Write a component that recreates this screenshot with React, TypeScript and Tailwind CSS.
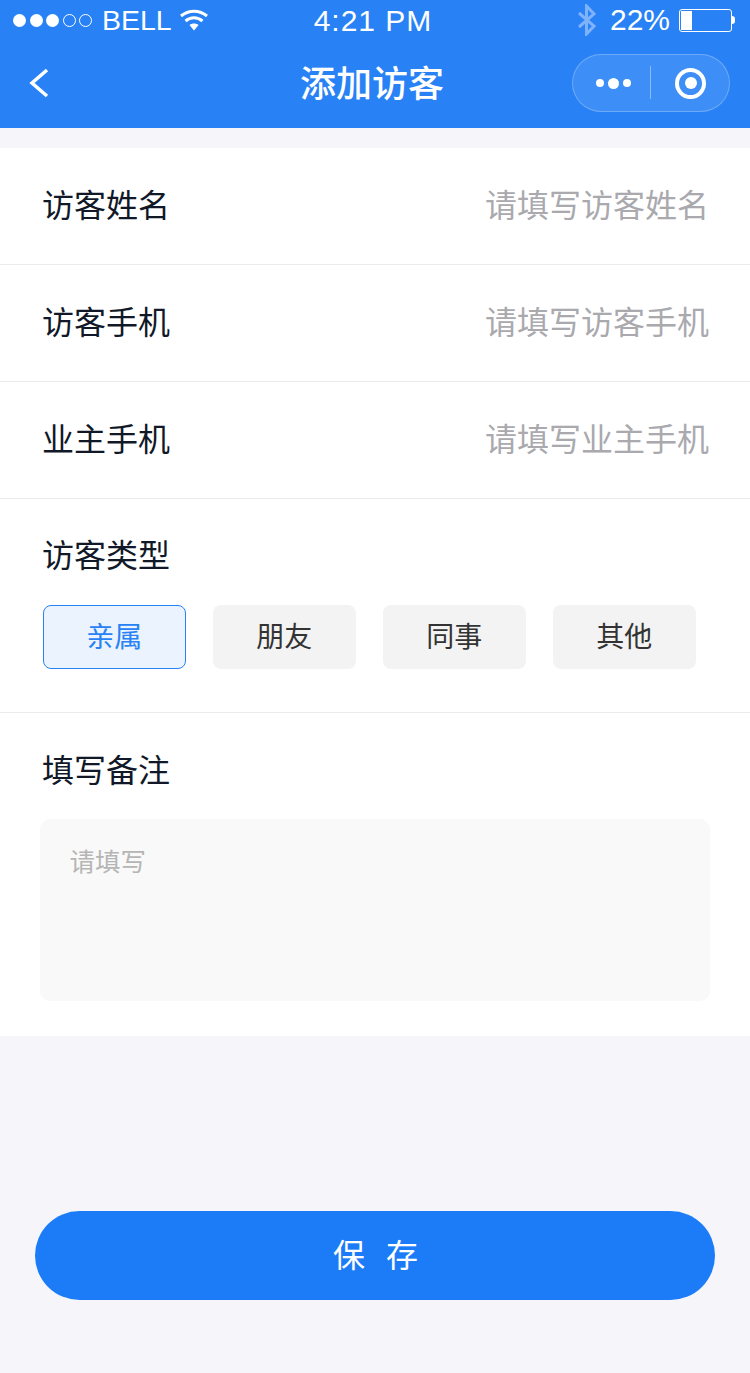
const cjk = "font-['Liberation_Sans','Noto_Sans_CJK_SC',sans-serif]";

const rows = [
  { label: '访客姓名', hint: '请填写访客姓名' },
  { label: '访客手机', hint: '请填写访客手机' },
  { label: '业主手机', hint: '请填写业主手机' },
];

const types = ['亲属', '朋友', '同事', '其他'];

function StatusBar() {
  return (
    <div className="grid h-[40px] grid-cols-3 items-center text-white">
      <div className="flex items-center pl-[13px]">
        <div className="flex items-center gap-[3.5px]">
          <span className="h-[13px] w-[13px] rounded-full bg-white" />
          <span className="h-[13px] w-[13px] rounded-full bg-white" />
          <span className="h-[13px] w-[13px] rounded-full bg-white" />
          <span className="h-[13px] w-[13px] rounded-full border border-white" />
          <span className="h-[13px] w-[13px] rounded-full border border-white" />
        </div>
        <span className="ml-[10px] text-[28.500px] leading-none">BELL</span>
        <svg className="ml-[8px] mt-[-1px]" width="28" height="23" viewBox="0 0 28 23" fill="none">
          <path d="M1 8C8.500 1.500 19.500 1.500 27 8" stroke="white" strokeWidth="3" />
          <path d="M5.500 13C10.500 8.800 17.500 8.800 22.500 13" stroke="white" strokeWidth="3" />
          <path d="M9.500 17C12 15 16 15 18.500 17L14 22.500Z" fill="white" />
        </svg>
      </div>
      <div className="pr-[4px] pt-[2px] text-center text-[30px] leading-none tracking-[1px] whitespace-nowrap">4:21 PM</div>
      <div className="flex items-center justify-end pr-[15px]">
        <svg className="mr-[13px]" width="20" height="32" viewBox="0 0 20 32" fill="none" stroke="#7fb2f9" strokeWidth="3">
          <path d="M2 9L17 22L9.500 30V2L17 10L2 23" />
        </svg>
        <span className="text-[30px] leading-none">22%</span>
        <div className="ml-[9px] flex items-center">
          <div className="h-[23px] w-[53px] rounded-[3px] border border-white p-[1px]">
            <div className="h-full w-[11px] bg-white" />
          </div>
          <div className="h-[8px] w-[3px] rounded-r-[3px] bg-white" />
        </div>
      </div>
    </div>
  );
}

function NavBar() {
  return (
    <div className="relative flex h-[88px] items-center justify-between pb-[3px] pl-[27px] pr-[20px]">
      <svg width="24" height="32" viewBox="0 0 24 32" fill="none" stroke="white" strokeWidth="3.500">
        <path d="M20 3L5 16L20 29" />
      </svg>
      <div className="absolute inset-x-0 top-[20px] pr-[6px] text-center text-[36px] font-medium leading-[50px] text-white">添加访客</div>
      <div className="flex h-[58px] w-[158px] items-center rounded-full border border-white/25 bg-white/10">
        <div className="flex w-[77px] items-center justify-end gap-[4px] pr-[19px] pt-[1px]">
          <span className="h-[8px] w-[8px] rounded-full bg-white" />
          <span className="h-[11px] w-[11px] rounded-full bg-white" />
          <span className="h-[8px] w-[8px] rounded-full bg-white" />
        </div>
        <div className="h-[33px] w-px bg-white/40" />
        <div className="flex flex-1 justify-center pl-[1px] pt-[1px]">
          <div className="flex h-[31px] w-[31px] items-center justify-center rounded-full border-[4px] border-white">
            <span className="h-[12px] w-[12px] rounded-full bg-white" />
          </div>
        </div>
      </div>
    </div>
  );
}

export default function App() {
  return (
    <div className={`flex h-[1373px] w-[750px] flex-col bg-[#f5f5fa] ${cjk}`}>
      <div className="bg-[#2882f5]">
        <StatusBar />
        <NavBar />
      </div>

      <div className="mt-[20px] bg-white">
        {rows.map((row) => (
          <div key={row.label} className="flex h-[117px] items-center justify-between border-b border-[#ececf0] pl-[42px] pr-[41px]">
            <span className="text-[32px] text-[#111827]">{row.label}</span>
            <span className="text-[32px] text-[#a9a9ae]">{row.hint}</span>
          </div>
        ))}

        <div className="h-[214px] border-b border-[#ececf0] px-[43px] pt-[35px]">
          <div className="ml-[-1px] text-[32px] leading-[44px] text-[#111827]">访客类型</div>
          <div className="mt-[27px] flex gap-[27.500px]">
            {types.map((type, i) => (
              <div
                key={type}
                className={
                  i === 0
                    ? 'flex h-[64px] w-[142.500px] items-center justify-center rounded-[8px] border border-[#2882f5] bg-[#eaf3fe] pt-[2px] text-[28px] text-[#2882f5]'
                    : 'flex h-[64px] w-[142.500px] items-center justify-center rounded-[8px] bg-[#f3f3f3] pt-[2px] text-[28px] text-[#333333]'
                }
              >
                {type}
              </div>
            ))}
          </div>
        </div>

        <div className="h-[323px] px-[40px] pt-[36px]">
          <div className="pl-[2px] text-[32px] leading-[44px] text-[#111827]">填写备注</div>
          <div className="mt-[26px] h-[182px] rounded-[10px] bg-[#f9f9f9] px-[29.500px] py-[25px] text-[25.500px] leading-[36px] text-[#b5b5b5]">
            请填写
          </div>
        </div>
      </div>

      <div className="mt-[175px] px-[35px]">
        <button className="h-[89px] w-full rounded-full bg-[#1c7cf7] pl-[22px] text-[32px] tracking-[21px] text-white">
          保存
        </button>
      </div>
    </div>
  );
}
